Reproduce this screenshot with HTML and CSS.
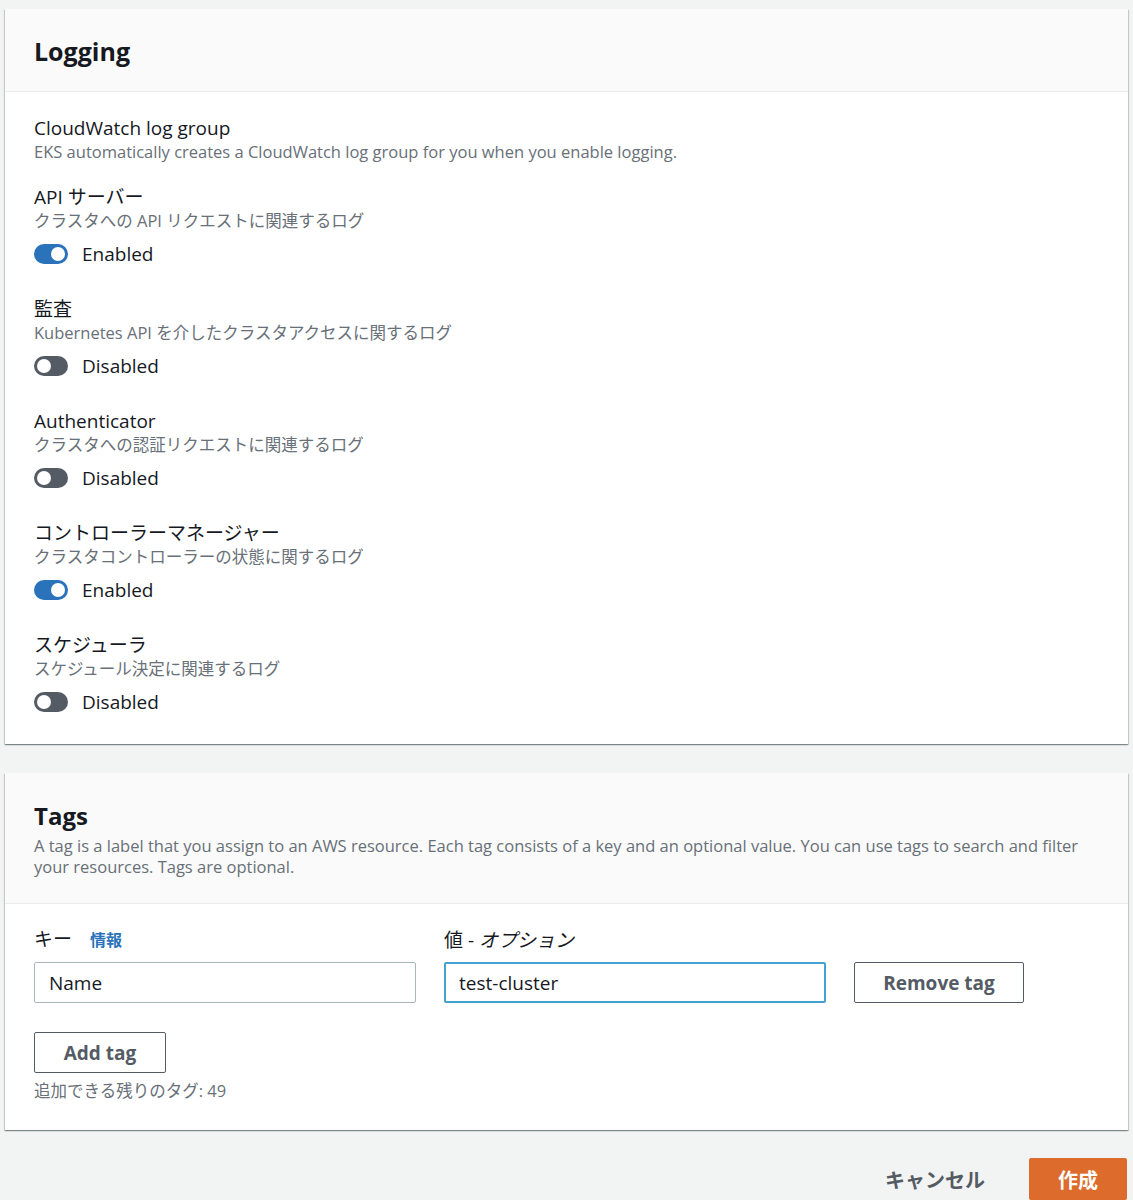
FILE: index.html
```html
<!DOCTYPE HTML>
<html>
    <head>
        <meta charset="UTF-8">
        <title>クラスターの作成</title>
        <link rel="stylesheet" href="styles.css">
    </head>
    <body>
        <!-- ログ設定 -->
        <div class="panel">
            <div class="panelHead">
                <h2>Logging</h2>
            </div>
            <div class="panelBody">
                <div class="field first">
                    <p class="label">CloudWatch log group</p>
                    <p class="desc">EKS automatically creates a CloudWatch log group for you when you enable logging.</p>
                </div>
                <div class="field">
                    <p class="label">API サーバー</p>
                    <p class="desc">クラスタへの API リクエストに関連するログ</p>
                    <label class="toggle on"><span class="switch"></span>Enabled</label>
                </div>
                <div class="field">
                    <p class="label">監査</p>
                    <p class="desc">Kubernetes API を介したクラスタアクセスに関するログ</p>
                    <label class="toggle"><span class="switch"></span>Disabled</label>
                </div>
                <div class="field">
                    <p class="label">Authenticator</p>
                    <p class="desc">クラスタへの認証リクエストに関連するログ</p>
                    <label class="toggle"><span class="switch"></span>Disabled</label>
                </div>
                <div class="field">
                    <p class="label">コントローラーマネージャー</p>
                    <p class="desc">クラスタコントローラーの状態に関するログ</p>
                    <label class="toggle on"><span class="switch"></span>Enabled</label>
                </div>
                <div class="field">
                    <p class="label">スケジューラ</p>
                    <p class="desc">スケジュール決定に関連するログ</p>
                    <label class="toggle"><span class="switch"></span>Disabled</label>
                </div>
            </div>
        </div>

        <!-- タグ -->
        <div class="panel">
            <div class="panelHead tagsHead">
                <h2>Tags</h2>
                <p class="desc">A tag is a label that you assign to an AWS resource. Each tag consists of a key and an optional value. You can use tags to search and filter your resources. Tags are optional.</p>
            </div>
            <div class="panelBody tagsBody">
                <div class="tagRow">
                    <div class="tagCol">
                        <p class="label">キー<a class="info" href="javascript:void(0);">情報</a></p>
                        <input class="text" type="text" value="Name">
                    </div>
                    <div class="tagCol">
                        <p class="label">値 - <i>オプション</i></p>
                        <input class="text focus" type="text" value="test-cluster">
                    </div>
                    <button class="btn removeBtn">Remove tag</button>
                </div>
                <button class="btn addBtn">Add tag</button>
                <p class="desc remain">追加できる残りのタグ: 49</p>
            </div>
        </div>

        <div id="actions">
            <button class="linkBtn">キャンセル</button>
            <button class="primaryBtn">作成</button>
        </div>
    </body>
</html>
```

FILE: styles.css
```css
body{
    margin:0;
    padding:9px 5px 0;
    background-color:#f2f3f3;
    color:#16191f;
    font-family:"Open Sans","Noto Sans CJK JP",sans-serif;
}
p,h2{margin:0;}

.panel{
    background-color:#fff;
    box-shadow:0 1px 1px 0 rgba(0,28,36,.3),1px 1px 1px 0 rgba(0,28,36,.15),-1px 1px 1px 0 rgba(0,28,36,.15);
    margin-bottom:29px;
}
.panelHead{
    background-color:#fafafa;
    border-bottom:1px solid #eaeded;
    padding:26px 29px 24px;
}
.panelHead h2{
    font-size:25px;
    font-weight:700;
    line-height:32px;
}
.panelBody{
    padding:24px 29px 26px;
}

.label{
    font-size:19px;
    line-height:24px;
}
.desc{
    font-size:16.5px;
    line-height:24px;
    color:#687078;
}

.field{
    margin-bottom:27px;
}
.field.first{
    margin-bottom:21px;
}
.field:last-child{
    margin-bottom:0;
}

/* スイッチ */
.toggle{
    display:flex;
    align-items:center;
    height:32px;
    margin-top:5px;
    font-size:19px;
    cursor:pointer;
}
.toggle .switch{
    position:relative;
    width:34px;
    height:20px;
    margin-right:14px;
    border-radius:10px;
    background-color:#545b64;
}
.toggle .switch::after{
    content:"";
    position:absolute;
    top:3px;
    left:3px;
    width:14px;
    height:14px;
    border-radius:50%;
    background-color:#fff;
}
.toggle.on .switch{
    background-color:#2a72b9;
}
.toggle.on .switch::after{
    left:17px;
}

/* タグ */
.tagsHead{
    padding:27px 29px 26px;
}
.tagsHead h2{
    font-size:24px;
}
.tagsHead .desc{
    margin-top:3px;
    line-height:21px;
}
.tagsBody{
    padding:23px 29px 27px;
}
.tagRow{
    display:flex;
    align-items:flex-end;
    gap:28px;
}
.tagCol{
    width:382px;
}
.tagCol .label{
    margin-bottom:10px;
}
.tagCol i{
    font-style:italic;
}
.info{
    margin-left:18px;
    color:#2a72b9;
    font-size:16px;
    font-weight:700;
    text-decoration:none;
}
.text{
    display:block;
    box-sizing:border-box;
    width:100%;
    height:41px;
    padding:0 14px;
    border:1px solid #aab7b8;
    border-radius:2px;
    color:#16191f;
    font-family:inherit;
    font-size:19px;
    outline:none;
}
.text.focus{
    border:2px solid #44a2d0;
    padding:0 13px;
}
.btn{
    box-sizing:border-box;
    height:41px;
    border:1px solid #545b64;
    border-radius:2px;
    background-color:#fff;
    color:#545b64;
    font-family:inherit;
    font-size:19px;
    font-weight:700;
}
.removeBtn{
    width:170px;
}
.addBtn{
    display:block;
    width:132px;
    margin-top:29px;
}
.remain{
    margin-top:6px;
    line-height:24px;
}

/* 下部ボタン */
#actions{
    display:flex;
    justify-content:flex-end;
    align-items:center;
    gap:24px;
    margin-top:-1px;
    padding-right:1px;
}
.linkBtn{
    border:none;
    background:none;
    padding:0 20px;
    color:#545b64;
    font-family:inherit;
    font-size:20px;
    font-weight:700;
}
.primaryBtn{
    width:98px;
    height:42px;
    border:none;
    border-radius:2px;
    background-color:#dd6b2c;
    color:#fff;
    font-family:inherit;
    font-size:20px;
    font-weight:700;
}
```
